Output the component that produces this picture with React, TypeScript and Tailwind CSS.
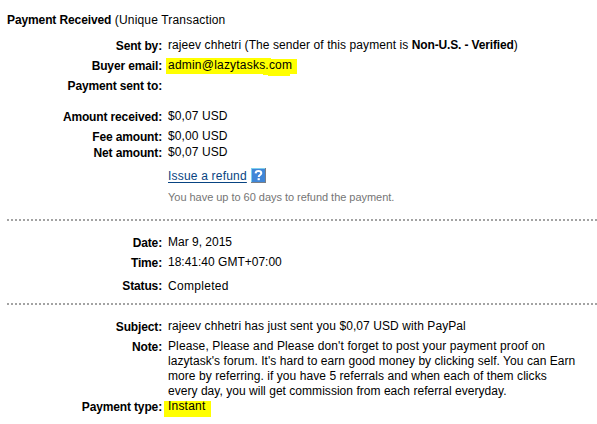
import type { ReactNode } from "react";

function Row({
  label,
  className = "",
  labelClass = "pt-px",
  children,
}: {
  label?: string;
  className?: string;
  labelClass?: string;
  children?: ReactNode;
}) {
  return (
    <div className={`grid grid-cols-[162px_1fr] gap-x-1.5 ${className}`}>
      <div className={`text-right font-bold tracking-[-0.14px] whitespace-nowrap ${labelClass}`}>{label}</div>
      <div className="whitespace-nowrap">{children}</div>
    </div>
  );
}

function HelpIcon() {
  return (
    <svg width="15" height="15" viewBox="0 0 15 15" className="-mt-px shrink-0">
      <rect width="15" height="15" fill="#7a7f86" />
      <rect width="14" height="14" fill="#7fd0ee" />
      <rect x="1" y="1" width="13" height="13" fill="#3f86d8" />
      <path d="M4.6 5.4C4.7 3.8 5.9 3 7.4 3c1.7 0 2.9.8 2.9 2.2 0 1.8-2.6 1.8-2.6 3.8" fill="none" stroke="#fff" strokeWidth="2" />
      <rect x="6.6" y="10.2" width="2.2" height="2" fill="#fff" />
    </svg>
  );
}

const NOTE_LINES = [
  { text: "Please, Please and Please don't forget to post your payment proof on", spacing: "tracking-[0.115px]" },
  { text: "lazytask's forum. It's hard to earn good money by clicking self. You can Earn", spacing: "tracking-[0.05px]" },
  { text: "more by referring. if you have 5 referrals and when each of them clicks", spacing: "tracking-[0.065px]" },
  { text: "every day, you will get commission from each referral everyday.", spacing: "tracking-[0.035px]" },
];

function Divider() {
  return (
    <div className="ml-[7px] h-0.5 bg-[repeating-linear-gradient(90deg,#a3a3a3_0_2px,transparent_2px_4px)]" />
  );
}

export default function App() {
  return (
    <main className="h-[424px] w-[597px] overflow-hidden bg-white pt-[13px] font-['Liberation_Sans',Arial,sans-serif] text-[12px] leading-[15px] text-black">
      <h1 className="h-[25px] pl-[7px] tracking-[0.17px]">
        <b className="tracking-[-0.11px]">Payment Received</b> (Unique Transaction
      </h1>

      <Row label="Sent by:" className="h-5">
        <span className="tracking-[0.08px]">
          rajeev chhetri (The sender of this payment is{" "}
          <b className="tracking-[-0.15px]">Non-U.S. - Verified</b>)
        </span>
      </Row>
      <Row label="Buyer email:" className="h-5">
        <span className="relative isolate tracking-[0.21px]">
          <svg width="131" height="18" className="absolute top-0 -left-0.5 -z-10">
            <path d="M0 0h105v1h26v15h-7v2h-22v-1h-5v-1H0z" fill="#ff0" />
          </svg>
          admin@lazytasks.com
        </span>
      </Row>
      <Row label="Payment sent to:" className="h-[31px]" />

      <Row label="Amount received:" className="h-5 tracking-[0.1px]">$0,07 USD</Row>
      <Row label="Fee amount:" className="h-4 tracking-[0.1px]">$0,00 USD</Row>
      <Row label="Net amount:" className="h-6 tracking-[0.1px]">$0,07 USD</Row>
      <Row className="h-[21px]">
        <div className="flex gap-1">
          <a href="#" className="tracking-[0.2px] text-[#084482] underline underline-offset-2">Issue a refund</a>
          <HelpIcon />
        </div>
      </Row>
      <Row className="h-[29px] text-[11px] tracking-[-0.03px] text-[#757575]">
        You have up to 60 days to refund the payment.
      </Row>

      <Divider />
      <Row label="Date:" className="mt-3.5 h-5">Mar 9, 2015</Row>
      <Row label="Time:" className="h-6">18:41:40 GMT+07:00</Row>
      <Row label="Status:" labelClass="" className="h-6 tracking-[0.3px]">Completed</Row>

      <Divider />
      <Row label="Subject:" className="mt-3.5 h-5 tracking-[0.08px]">
        rajeev chhetri has just sent you $0,07 USD with PayPal
      </Row>
      <Row label="Note:" className="h-[60px]">
        {NOTE_LINES.map(({ text, spacing }) => (
          <div key={text} className={spacing}>{text}</div>
        ))}
      </Row>
      <Row label="Payment type:" className="h-5">
        <span className="relative isolate tracking-[0.2px]">
          <span className="absolute top-0.5 -left-1 -z-10 h-4 w-[47px] bg-[#ff0]" />
          Instant
        </span>
      </Row>
    </main>
  );
}
